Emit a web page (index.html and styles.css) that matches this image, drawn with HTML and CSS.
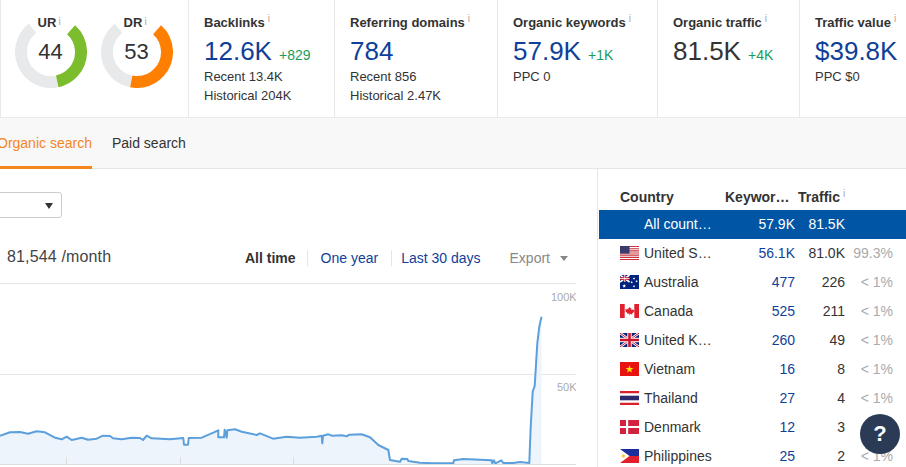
FILE: index.html
```html
<!DOCTYPE html>
<html lang="en">
<head>
<meta charset="utf-8">
<title>Site overview</title>
<link rel="stylesheet" href="styles.css">
</head>
<body>
<header class="stats">
  <section class="ratings">
    <div class="donut">
      <svg class="donut-svg" width="72" height="72" viewBox="0 0 72 72">
        <circle class="arc arc-track" cx="36" cy="36" r="30" pathLength="360" stroke-dasharray="154 206" transform="rotate(78 36 36)"/>
        <circle class="arc arc-green" cx="36" cy="36" r="30" pathLength="360" stroke-dasharray="126 234" transform="rotate(-48 36 36)"/>
      </svg>
      <span class="donut-label">UR<sup class="info">i</sup></span>
      <span class="donut-value">44</span>
    </div>
    <div class="donut">
      <svg class="donut-svg" width="72" height="72" viewBox="0 0 72 72">
        <circle class="arc arc-track" cx="36" cy="36" r="30" pathLength="360" stroke-dasharray="131 229" transform="rotate(101 36 36)"/>
        <circle class="arc arc-orange" cx="36" cy="36" r="30" pathLength="360" stroke-dasharray="149 211" transform="rotate(-48 36 36)"/>
      </svg>
      <span class="donut-label">DR<sup class="info">i</sup></span>
      <span class="donut-value">53</span>
    </div>
  </section>
  <section class="stat stat-backlinks">
    <h3 class="stat-title">Backlinks<sup class="info">i</sup></h3>
    <div class="stat-main"><span class="num">12.6K</span><span class="delta">+829</span></div>
    <p class="stat-sub">Recent 13.4K</p>
    <p class="stat-sub">Historical 204K</p>
  </section>
  <section class="stat stat-domains">
    <h3 class="stat-title">Referring domains<sup class="info">i</sup></h3>
    <div class="stat-main"><span class="num">784</span></div>
    <p class="stat-sub">Recent 856</p>
    <p class="stat-sub">Historical 2.47K</p>
  </section>
  <section class="stat stat-keywords">
    <h3 class="stat-title">Organic keywords<sup class="info">i</sup></h3>
    <div class="stat-main"><span class="num">57.9K</span><span class="delta">+1K</span></div>
    <p class="stat-sub">PPC 0</p>
  </section>
  <section class="stat stat-traffic">
    <h3 class="stat-title">Organic traffic<sup class="info">i</sup></h3>
    <div class="stat-main"><span class="num num-dark">81.5K</span><span class="delta">+4K</span></div>
  </section>
  <section class="stat stat-value">
    <h3 class="stat-title">Traffic value<sup class="info">i</sup></h3>
    <div class="stat-main"><span class="num">$39.8K</span></div>
    <p class="stat-sub">PPC $0</p>
  </section>
</header>

<nav class="tabs">
  <a class="tab tab-active">Organic search</a>
  <a class="tab">Paid search</a>
</nav>

<main class="content">
  <section class="left">
    <div class="select"><span class="caret"></span></div>
    <div class="toolbar">
      <span class="monthly">81,544 /month</span>
      <div class="ranges">
        <span class="range range-active">All time</span>
        <span class="range range-link">One year</span>
        <span class="range range-link">Last 30 days</span>
        <span class="export">Export<span class="export-caret"></span></span>
      </div>
    </div>
    <svg class="chart" width="576" height="184" viewBox="0 283 576 184">
      <line class="grid" x1="0" y1="283.5" x2="576" y2="283.5"/>
      <line class="grid" x1="0" y1="374.5" x2="576" y2="374.5"/>
      <path class="area" d="M0 435.7L10 432.3L20 432L28 433.7L36.7 431.3L45 432.3L55 437.7L61.7 439.3L66.7 436.7L71.7 440L81.7 437.7L88 439.7L96.7 438.7L103 435.7L110 436L113 438.3L121.7 439.3L131.7 437.7L140 438L143 440L146.7 435.7L151.7 438.3L170 439.3L183.3 438L184 444.7L188 444.7L188.7 438L201.7 437.7L213.3 432.7L218.3 430.3L218.3 437.3L224 437.3L224.7 429.7L226.7 437.7L227.3 430.3L235 429.3L241.7 431.7L256.7 435L260 433.3L273 438.7L286.7 436.7L300 437.7L316.7 436.7L321.7 435.7L322.3 443.3L323 435.7L328.3 434.3L331.7 435.7L341.7 435.3L346.7 436.3L349.3 434.7L361.7 434.3L370 437.3L378.3 445L388.3 450L390 460L400 461.7L401.7 458.7L407.3 459L408.3 461L420 462.7L433.3 463.3L453.3 463.3L454 460.3L463.3 459L491.7 460.3L492.3 463.3L494 460.3L495.3 463.3L501.3 460.3L503.3 463L513.3 463L520 462L529.3 463L530.7 426.7L532.7 391.7L534.7 386L537.3 343.3L539.3 326.7L541.5 316.7L541.5 464L0 464Z"/>
      <path class="trend" d="M0 435.7L10 432.3L20 432L28 433.7L36.7 431.3L45 432.3L55 437.7L61.7 439.3L66.7 436.7L71.7 440L81.7 437.7L88 439.7L96.7 438.7L103 435.7L110 436L113 438.3L121.7 439.3L131.7 437.7L140 438L143 440L146.7 435.7L151.7 438.3L170 439.3L183.3 438L184 444.7L188 444.7L188.7 438L201.7 437.7L213.3 432.7L218.3 430.3L218.3 437.3L224 437.3L224.7 429.7L226.7 437.7L227.3 430.3L235 429.3L241.7 431.7L256.7 435L260 433.3L273 438.7L286.7 436.7L300 437.7L316.7 436.7L321.7 435.7L322.3 443.3L323 435.7L328.3 434.3L331.7 435.7L341.7 435.3L346.7 436.3L349.3 434.7L361.7 434.3L370 437.3L378.3 445L388.3 450L390 460L400 461.7L401.7 458.7L407.3 459L408.3 461L420 462.7L433.3 463.3L453.3 463.3L454 460.3L463.3 459L491.7 460.3L492.3 463.3L494 460.3L495.3 463.3L501.3 460.3L503.3 463L513.3 463L520 462L529.3 463L530.7 426.7L532.7 391.7L534.7 386L537.3 343.3L539.3 326.7L541.5 316.7"/>
      <line class="axis" x1="0" y1="464.5" x2="576" y2="464.5"/>
      <line class="tick" x1="66.5" y1="457" x2="66.5" y2="464"/>
      <line class="tick" x1="180.5" y1="457" x2="180.5" y2="464"/>
      <line class="tick" x1="293.5" y1="457" x2="293.5" y2="464"/>
      <text class="chart-label" x="551" y="301">100K</text>
      <text class="chart-label" x="557" y="391">50K</text>
    </svg>
  </section>

  <aside class="countries">
    <div class="row row-head">
      <span class="cell-name">Country</span>
      <span class="cell-kw-head">Keywor…</span>
      <span class="cell-traffic-head">Traffic<sup class="info">i</sup></span>
    </div>
    <div class="row row-selected">
      <span class="cell-name"><span class="flag"></span>All count…</span>
      <span class="cell-num">57.9K</span>
      <span class="cell-num">81.5K</span>
      <span class="cell-pct"></span>
    </div>
    <div class="row">
      <span class="cell-name">
        <svg class="flag" viewBox="0 0 19 14"><rect width="19" height="14" fill="#fff"/><path fill="#c8323c" d="M0 0h19v1.1H0zM0 2.2h19v1.1H0zM0 4.3h19v1.1H0zM0 6.5h19v1.1H0zM0 8.6h19v1.1H0zM0 10.8h19v1.1H0zM0 12.9h19V14H0z"/><rect width="9.5" height="7.6" fill="#3c3b6e"/></svg>United S…</span>
      <span class="cell-num link">56.1K</span>
      <span class="cell-num">81.0K</span>
      <span class="cell-pct">99.3%</span>
    </div>
    <div class="row">
      <span class="cell-name">
        <svg class="flag" viewBox="0 0 19 14"><rect width="19" height="14" fill="#00247d"/><path stroke="#fff" stroke-width="1.6" d="M0 0l9.5 7M9.5 0L0 7"/><path stroke="#cf142b" stroke-width="2.4" d="M4.75 0v7M0 3.5h9.5"/><path stroke="#fff" stroke-width=".8" d="M4.75 0v7M0 3.5h9.5"/><path fill="#fff" d="M4.2 9l.6 1.2 1.2.2-.9.9.2 1.2-1.1-.6-1.1.6.2-1.2-.9-.9 1.2-.2zM14 2.2l.4.8.8.1-.6.6.1.8-.7-.4-.7.4.1-.8-.6-.6.8-.1zM11.7 6l.4.8.8.1-.6.6.1.8-.7-.4-.7.4.1-.8-.6-.6.8-.1zM16.6 5l.4.8.8.1-.6.6.1.8-.7-.4-.7.4.1-.8-.6-.6.8-.1zM14 10l.4.8.8.1-.6.6.1.8-.7-.4-.7.4.1-.8-.6-.6.8-.1z"/></svg>Australia</span>
      <span class="cell-num link">477</span>
      <span class="cell-num">226</span>
      <span class="cell-pct">&lt; 1%</span>
    </div>
    <div class="row">
      <span class="cell-name">
        <svg class="flag" viewBox="0 0 19 14"><rect width="19" height="14" fill="#fff"/><path fill="#e0202c" d="M0 0h4.7v14H0zM14.3 0H19v14h-4.7zM9.5 2.6l1 1.9 1-.5-.4 2.3 1.3-1.1.4.9 1.4-.3-.5 1.6.6.3-2.2 1.8.3.9-2.4-.3V11h-.6V9.5l-2.4.3.3-.9-2.2-1.8.6-.3-.5-1.6 1.4.3.4-.9 1.3 1.1L7.9 4l1 .5z"/></svg>Canada</span>
      <span class="cell-num link">525</span>
      <span class="cell-num">211</span>
      <span class="cell-pct">&lt; 1%</span>
    </div>
    <div class="row">
      <span class="cell-name">
        <svg class="flag" viewBox="0 0 19 14"><rect width="19" height="14" fill="#00247d"/><path stroke="#fff" stroke-width="2.6" d="M0 0l19 14M19 0L0 14"/><path stroke="#cf142b" stroke-width="1" d="M0 0l19 14M19 0L0 14"/><path stroke="#fff" stroke-width="4.4" d="M9.5 0v14M0 7h19"/><path stroke="#cf142b" stroke-width="2.6" d="M9.5 0v14M0 7h19"/></svg>United K…</span>
      <span class="cell-num link">260</span>
      <span class="cell-num">49</span>
      <span class="cell-pct">&lt; 1%</span>
    </div>
    <div class="row">
      <span class="cell-name">
        <svg class="flag" viewBox="0 0 19 14"><rect width="19" height="14" fill="#e8130f"/><path fill="#ffe000" d="M9.5 3.2l1 2.7 2.9.1-2.3 1.8.8 2.8-2.4-1.6-2.4 1.6.8-2.8L5.6 6l2.9-.1z"/></svg>Vietnam</span>
      <span class="cell-num link">16</span>
      <span class="cell-num">8</span>
      <span class="cell-pct">&lt; 1%</span>
    </div>
    <div class="row">
      <span class="cell-name">
        <svg class="flag" viewBox="0 0 19 14"><rect width="19" height="14" fill="#fff"/><path fill="#d9202c" d="M0 0h19v2.3H0zM0 11.7h19V14H0z"/><rect y="4.7" width="19" height="4.6" fill="#2d2a6e"/></svg>Thailand</span>
      <span class="cell-num link">27</span>
      <span class="cell-num">4</span>
      <span class="cell-pct">&lt; 1%</span>
    </div>
    <div class="row">
      <span class="cell-name">
        <svg class="flag" viewBox="0 0 19 14"><rect width="19" height="14" fill="#d4213d"/><path fill="#fff" d="M6 0h2.2v14H6zM0 5.9h19v2.2H0z"/></svg>Denmark</span>
      <span class="cell-num link">12</span>
      <span class="cell-num">3</span>
      <span class="cell-pct">&lt; 1%</span>
    </div>
    <div class="row">
      <span class="cell-name">
        <svg class="flag" viewBox="0 0 19 14"><rect width="19" height="7" fill="#1b2c9b"/><rect y="7" width="19" height="7" fill="#e0202c"/><path fill="#fff" d="M0 0l9.5 7L0 14z"/><circle cx="3.4" cy="7" r="1.7" fill="#f6c944"/></svg>Philippines</span>
      <span class="cell-num link">25</span>
      <span class="cell-num">2</span>
      <span class="cell-pct">&lt; 1%</span>
    </div>
  </aside>
</main>

<button class="help">?</button>
</body>
</html>
```

FILE: styles.css
```css
* { box-sizing: border-box; }

html, body {
  margin: 0;
  height: 467px;
  overflow: hidden;
  background: #fff;
  font-family: "Liberation Sans", Arial, sans-serif;
  font-size: 14px;
  color: #333;
}

/* top statistics */
.stats {
  display: flex;
  height: 118px;
  border-bottom: 1px solid #e9e9e9;
}
.ratings {
  width: 188px;
  flex: none;
  display: flex;
  gap: 14px;
  padding: 16px 0 0 14px;
  border-left: 1px solid #e9e9e9;
}
.donut {
  position: relative;
  width: 72px;
  height: 72px;
}
.donut-svg { display: block; }
.arc { fill: none; stroke-width: 12; }
.arc-track { stroke: #e8e9ea; }
.arc-green { stroke: #7cbd2e; }
.arc-orange { stroke: #ff7f00; }
.donut-label {
  position: absolute;
  top: -1px;
  left: 0;
  right: 8px;
  text-align: center;
  font-size: 13px;
  font-weight: 700;
  line-height: 15px;
}
.donut-value {
  position: absolute;
  top: 23px;
  left: 0;
  right: 1px;
  text-align: center;
  font-size: 22px;
  line-height: 26px;
}
.info {
  font-size: 10px;
  font-weight: 400;
  color: #aaa;
  line-height: 0;
  margin-left: 3px;
  vertical-align: 5px;
}
.donut-label .info { position: absolute; margin-left: 2px; top: 7px; vertical-align: baseline; }

.stat {
  flex: none;
  padding: 15px 0 0 15px;
  border-left: 1px solid #e9e9e9;
}
.stat-backlinks { width: 146px; }
.stat-domains { width: 163px; }
.stat-keywords { width: 160px; }
.stat-traffic { width: 142px; }
.stat-value { flex: 1; min-width: 0; white-space: nowrap; }
.stat-title {
  margin: 0;
  font-size: 13px;
  font-weight: 700;
  line-height: 16px;
}
.stat-main {
  display: flex;
  align-items: baseline;
  gap: 7px;
  height: 31px;
  margin-top: 5px;
  line-height: 31px;
}
.num { font-size: 26px; color: #0f3f99; }
.num-dark { color: #333; }
.delta { font-size: 14px; color: #1a9c5b; }
.stat-sub {
  margin: 0;
  font-size: 13px;
  line-height: 19px;
}

/* tabs */
.tabs {
  display: flex;
  height: 51px;
  margin-left: -3px;
  gap: 20px;
  background: #f8f8f8;
  border-bottom: 1px solid #e6e6e6;
}
.tab {
  height: 51px;
  line-height: 51px;
  font-size: 14px;
  color: #333;
}
.tab-active {
  color: #f5861f;
  border-bottom: 3px solid #f5861f;
}

/* content */
.content {
  display: flex;
  height: 298px;
}
.left {
  width: 597px;
  flex: none;
  overflow: hidden;
}
.select {
  position: relative;
  width: 72px;
  height: 26px;
  margin: 23px 0 0 -10px;
  border: 1px solid #ccc;
  border-radius: 3px;
}
.caret {
  position: absolute;
  right: 8px;
  top: 10px;
  border: 4px solid transparent;
  border-top: 6px solid #333;
  border-bottom: 0;
}
.toolbar {
  display: flex;
  justify-content: space-between;
  align-items: center;
  width: 576px;
  height: 24px;
  margin-top: 28px;
  padding-left: 7px;
}
.monthly { margin-top: -2px; font-size: 16px; letter-spacing: .15px; color: #444; }
.ranges {
  display: flex;
  align-items: center;
  padding-right: 8px;
}
.range {
  font-size: 14px;
  padding: 0 13px;
  line-height: 16px;
  border-right: 1px solid #e6e6e6;
}
.range-active { font-weight: 700; padding-right: 11px; }
.range-link { color: #0f3f99; }
.range-link:nth-child(3) { border-right: 0; padding-left: 9px; }
.export {
  display: flex;
  align-items: center;
  gap: 10px;
  margin-left: 16px;
  font-size: 14px;
  color: #888;
}
.export-caret {
  border: 4px solid transparent;
  border-top: 5px solid #888;
  border-bottom: 0;
}
.chart {
  display: block;
  margin-top: 13px;
}
.grid { stroke: #e6e6e6; stroke-width: 1; }
.axis { stroke: #ddd; stroke-width: 1; }
.tick { stroke: #ddd; stroke-width: 1; }
.area { fill: #edf4fb; }
.trend { fill: none; stroke: #5b9fdc; stroke-width: 2; stroke-linejoin: round; }
.chart-label {
  font-size: 11px;
  fill: #aaa;
  font-family: "Liberation Sans", Arial, sans-serif;
}

/* country table */
.countries {
  flex: 1;
  min-width: 0;
  padding-left: 1px;
  border-left: 1px solid #e6e6e6;
}
.row {
  display: grid;
  grid-template-columns: 146px 50px 50px 48px;
  align-items: center;
  height: 29px;
  padding-bottom: 2px;
  font-size: 14px;
  white-space: nowrap;
}
.row-head {
  height: 41px;
  padding: 14px 0 0;
  font-weight: 700;
}
.row-selected {
  background: #0055a5;
  color: #fff;
}
.cell-name {
  display: flex;
  align-items: center;
  gap: 5px;
  padding-left: 21px;
}
.flag {
  display: block;
  flex: none;
  width: 19px;
  height: 14px;
}
.cell-num { text-align: right; }
.link { color: #0f3f99; }
.cell-pct { text-align: right; color: #aaa; }
.cell-kw-head { margin-left: -20px; }
.cell-traffic-head { margin-left: 3px; }

.help {
  position: fixed;
  left: 860px;
  top: 414px;
  width: 40px;
  height: 40px;
  padding: 0;
  border: 0;
  border-radius: 50%;
  background: #2b3a55;
  color: #fff;
  font-family: "Liberation Sans", Arial, sans-serif;
  font-size: 22px;
  font-weight: 700;
  line-height: 40px;
  text-align: center;
}
```
